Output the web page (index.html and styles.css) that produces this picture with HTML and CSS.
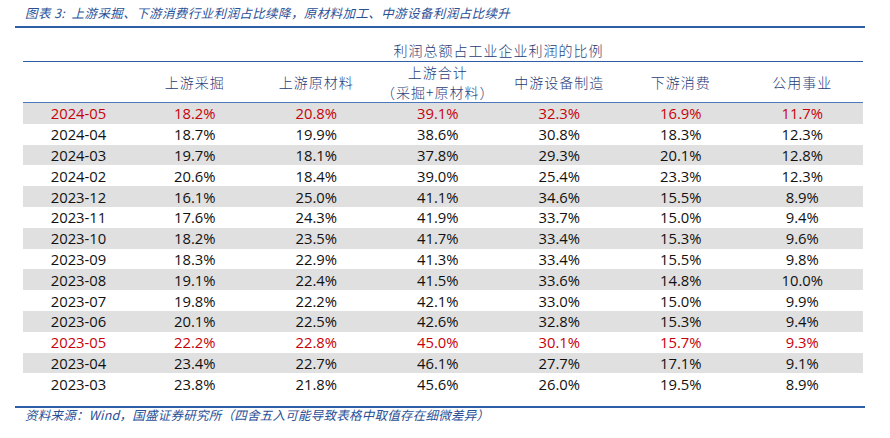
FILE: index.html
```html
<!DOCTYPE html>
<html lang="zh">
<head>
<meta charset="utf-8">
<link rel="stylesheet" href="styles.css">
</head>
<body>
<div class="frame">
  <div class="title">图表 3:&nbsp; 上游采掘、下游消费行业利润占比续降，原材料加工、中游设备利润占比续升</div>
  <div class="tablewrap">
    <table class="data">
      <colgroup>
        <col class="c0"><col class="cn"><col class="cn"><col class="cn"><col class="cn"><col class="cn"><col class="cn">
      </colgroup>
      <thead>
        <tr class="cap"><th></th><th colspan="6" class="captext">利润总额占工业企业利润的比例</th></tr>
        <tr class="hdr">
          <th></th>
          <th>上游采掘</th>
          <th>上游原材料</th>
          <th><span class="l1">上游合计</span><span class="l2">（采掘+原材料）</span></th>
          <th>中游设备制造</th>
          <th>下游消费</th>
          <th>公用事业</th>
        </tr>
      </thead>
      <tbody>
        <tr class="odd red"><td>2024-05</td><td>18.2%</td><td>20.8%</td><td>39.1%</td><td>32.3%</td><td>16.9%</td><td>11.7%</td></tr>
        <tr><td>2024-04</td><td>18.7%</td><td>19.9%</td><td>38.6%</td><td>30.8%</td><td>18.3%</td><td>12.3%</td></tr>
        <tr class="odd"><td>2024-03</td><td>19.7%</td><td>18.1%</td><td>37.8%</td><td>29.3%</td><td>20.1%</td><td>12.8%</td></tr>
        <tr><td>2024-02</td><td>20.6%</td><td>18.4%</td><td>39.0%</td><td>25.4%</td><td>23.3%</td><td>12.3%</td></tr>
        <tr class="odd"><td>2023-12</td><td>16.1%</td><td>25.0%</td><td>41.1%</td><td>34.6%</td><td>15.5%</td><td>8.9%</td></tr>
        <tr><td>2023-11</td><td>17.6%</td><td>24.3%</td><td>41.9%</td><td>33.7%</td><td>15.0%</td><td>9.4%</td></tr>
        <tr class="odd"><td>2023-10</td><td>18.2%</td><td>23.5%</td><td>41.7%</td><td>33.4%</td><td>15.3%</td><td>9.6%</td></tr>
        <tr><td>2023-09</td><td>18.3%</td><td>22.9%</td><td>41.3%</td><td>33.4%</td><td>15.5%</td><td>9.8%</td></tr>
        <tr class="odd"><td>2023-08</td><td>19.1%</td><td>22.4%</td><td>41.5%</td><td>33.6%</td><td>14.8%</td><td>10.0%</td></tr>
        <tr><td>2023-07</td><td>19.8%</td><td>22.2%</td><td>42.1%</td><td>33.0%</td><td>15.0%</td><td>9.9%</td></tr>
        <tr class="odd"><td>2023-06</td><td>20.1%</td><td>22.5%</td><td>42.6%</td><td>32.8%</td><td>15.3%</td><td>9.4%</td></tr>
        <tr class="red"><td>2023-05</td><td>22.2%</td><td>22.8%</td><td>45.0%</td><td>30.1%</td><td>15.7%</td><td>9.3%</td></tr>
        <tr class="odd"><td>2023-04</td><td>23.4%</td><td>22.7%</td><td>46.1%</td><td>27.7%</td><td>17.1%</td><td>9.1%</td></tr>
        <tr><td>2023-03</td><td>23.8%</td><td>21.8%</td><td>45.6%</td><td>26.0%</td><td>19.5%</td><td>8.9%</td></tr>
      </tbody>
    </table>
  </div>
  <div class="source">资料来源：Wind，国盛证券研究所（四舍五入可能导致表格中取值存在细微差异）</div>
</div>
</body>
</html>
```

FILE: styles.css
```css
html, body {
  margin: 0;
  padding: 0;
  background: #ffffff;
}

.frame {
  margin-left: 15px;
  width: 850px;
}

.title {
  padding: 5px 0 0 10px;
  height: 21px;
  line-height: 16px;
  font-family: "Noto Sans CJK SC", sans-serif;
  font-size: 12.5px;
  font-style: italic;
  letter-spacing: 0.4px;
  color: #2a4f96;
  border-bottom: 2px solid #2f5ea6;
  white-space: nowrap;
}

.tablewrap {
  padding-left: 8px;
  height: 378px;
  border-bottom: 2px solid #2f5ea6;
}

.data {
  border-collapse: collapse;
  table-layout: fixed;
  width: 840px;
  font-family: "Open Sans", "Liberation Sans", sans-serif;
  font-size: 14.8px;
  color: #111111;
}

.c0 { width: 111px; }
.cn { width: 121.5px; }

.data th {
  padding: 0;
  font-family: "Noto Sans CJK SC", sans-serif;
  font-weight: 300;
  font-size: 14px;
  color: #1f3d78;
  text-align: center;
  letter-spacing: 1px;
}

.cap th {
  height: 33px;
  vertical-align: bottom;
  line-height: 22px;
  border-bottom: 1.5px solid #2f5ea6;
}

.captext {
  font-size: 14.5px;
}

.hdr th {
  height: 38px;
  line-height: 20px;
  vertical-align: middle;
  border-bottom: 1.5px solid #4a78bd;
}

.hdr .l1, .hdr .l2 {
  display: block;
}

.data td {
  padding: 0;
  height: 20.8px;
  line-height: 20px;
  text-align: center;
  white-space: nowrap;
}

.data tr.odd td {
  background: #e0e0e0;
}

.data tr.red td {
  color: #c8000a;
}

.source {
  padding: 0 0 0 10px;
  line-height: 14px;
  height: 14px;
  font-family: "Noto Sans CJK SC", sans-serif;
  font-size: 12.5px;
  font-style: italic;
  letter-spacing: 0.25px;
  color: #2a4f96;
  white-space: nowrap;
}
```
